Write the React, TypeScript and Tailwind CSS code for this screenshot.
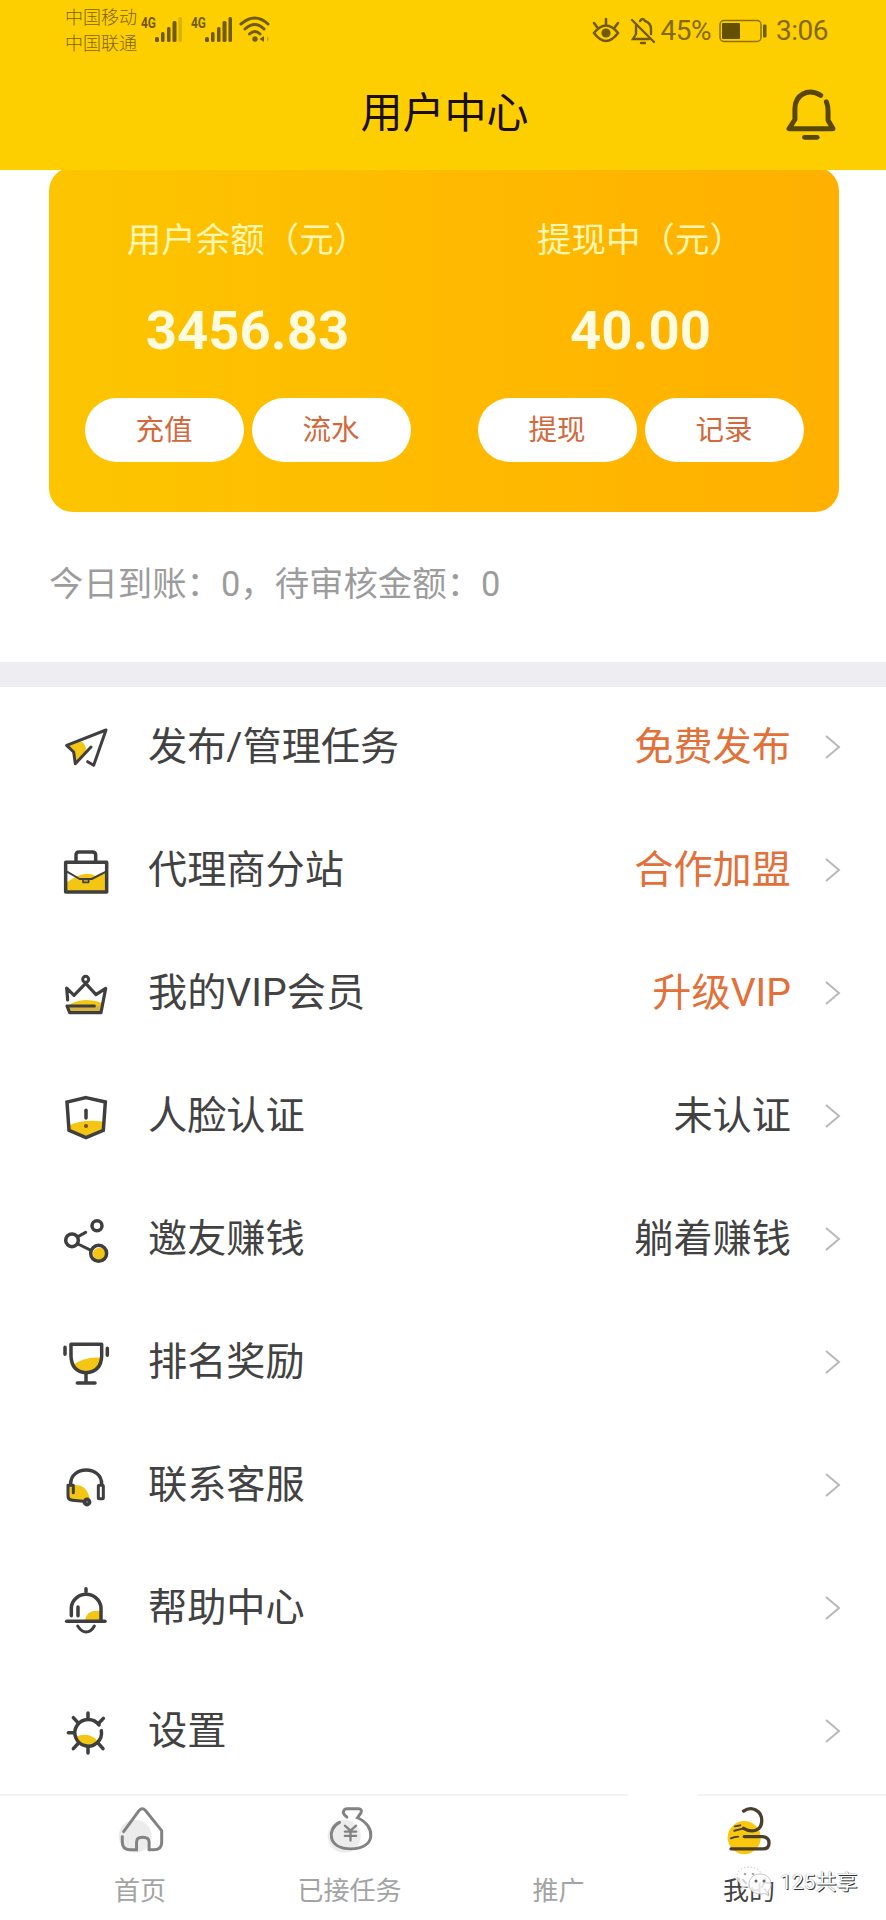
import { ReactNode } from 'react';

interface MenuItem {
  label: string;
  value?: string;
  highlight?: boolean;
  icon: ReactNode;
}

const YELLOW = '#f3c613';

/* メニューアイコン(線画 + 黄色の塗り) */
function MenuIcon({ children }: { children: ReactNode }) {
  return (
    <svg
      className="w-[46px] h-[46px] shrink-0 overflow-visible"
      viewBox="0 0 138 138"
      fill="none"
      stroke="#3f3f3f"
      strokeWidth={10.5}
      strokeLinecap="round"
      strokeLinejoin="round"
    >
      {children}
    </svg>
  );
}

const menuItems: MenuItem[] = [
  {
    label: '发布/管理任务',
    value: '免费发布',
    highlight: true,
    icon: (
      <>
        <path d="M12 62L48 50Q72 56 68 82L38 118L32 84Z" fill={YELLOW} stroke="none" />
        <path
          d="M74 113L92 124L129 18L11 64L32 84L37 119L84 69"
          strokeWidth={9}
        />
      </>
    ),
  },
  {
    label: '代理商分站',
    value: '合作加盟',
    highlight: true,
    icon: (
      <>
        <path d="M10 132V108Q38 84 70 80Q92 80 100 90L132 74V132Z" fill={YELLOW} stroke="none" />
        <path d="M8 46H131V135H8Z" />
        <path d="M39 44V24Q39 15 48 15H88Q98 15 98 24V44" />
        <path d="M12 74L50 96H86L129 74" strokeWidth={6} />
        <path d="M60 97H77V106H60Z" strokeWidth={5} />
      </>
    ),
  },
  {
    label: '我的VIP会员',
    value: '升级VIP',
    highlight: true,
    icon: (
      <>
        <path d="M22 102Q65 80 116 98L110 128H22Z" fill={YELLOW} stroke="none" />
        <path d="M14 108H110L112 128H22Z" fill="#d5b340" stroke="none" />
        <circle cx="68" cy="28" r="9" strokeWidth={9} />
        <path
          d="M14 90L11 54L33 76L68 40L99 74L128 55L114 128H20L12 108H94"
          strokeWidth={9.5}
        />
      </>
    ),
  },
  {
    label: '人脸认证',
    value: '未认证',
    icon: (
      <>
        <path d="M16 98Q60 76 124 86L122 113L69 137L17 113Z" fill={YELLOW} stroke="none" />
        <path d="M69 14L127 27L121 112L69 134L18 112L12 27Z" strokeLinejoin="miter" />
        <path d="M69 52V75" />
        <circle cx="69" cy="99" r="6" fill="#7b4a10" stroke="none" />
      </>
    ),
  },
  {
    label: '邀友赚钱',
    value: '躺着赚钱',
    icon: (
      <>
        <circle cx="109" cy="114" r="19" fill={YELLOW} stroke="none" />
        <circle cx="27" cy="73" r="19" />
        <circle cx="102" cy="29" r="15" />
        <circle cx="107" cy="112" r="24" />
        <path d="M45 62L68 49M45 84L84 103" strokeWidth={9} />
      </>
    ),
  },
  {
    label: '排名奖励',
    icon: (
      <>
        <path d="M32 78Q62 52 114 56Q108 96 69 98Q42 96 32 78Z" fill={YELLOW} stroke="none" />
        <path d="M24 16H116V52Q114 98 69 101Q26 98 24 52Z" />
        <path d="M69 101V130M43 132H96" />
        <path d="M6 25V46M133 28V49" />
      </>
    ),
  },
  {
    label: '联系客服',
    icon: (
      <>
        <path d="M14 74Q66 56 80 108L64 118L16 112Z" fill={YELLOW} stroke="none" />
        <path d="M23 66C23 10 116 10 116 66" />
        <path d="M31 92V70H15V103Q16 114 28 115L60 118" strokeWidth={9} />
        <rect x="106" y="70" width="15" height="40" rx="3" strokeWidth={9} />
        <circle cx="72" cy="120" r="8" fill="#7a7a7a" />
      </>
    ),
  },
  {
    label: '帮助中心',
    icon: (
      <>
        <path d="M66 106Q70 74 112 78V106Z" fill={YELLOW} stroke="none" />
        <path d="M69 11V20M25 92V66A45 45 0 0 1 114 66V106" />
        <path d="M45 66V92" />
        <path d="M11 109H126" />
        <path d="M44 123Q56 141 69 141Q84 141 94 123" strokeWidth={9} />
      </>
    ),
  },
  {
    label: '设置',
    icon: (
      <>
        <path d="M38 86Q76 70 104 98Q92 114 75 114Q46 112 38 86Z" fill={YELLOW} stroke="none" />
        <path d="M108 51A40 40 0 1 0 115 68" />
        <path d="M75 15V30M31 29L44 43M121 31L108 45M16 74H32M31 122L44 108M75 135V118M120 122L106 106" />
      </>
    ),
  },
];

/* 信号強度 */
function Signal({ weak }: { weak?: boolean }) {
  return (
    <svg className="w-[42px] h-[28px]" viewBox="0 0 42 28" fill="#705a00">
      <text
        x="0"
        y="12.5"
        fontSize="15"
        fontWeight="700"
        fontFamily="Roboto, sans-serif"
        textLength="15"
        lengthAdjust="spacingAndGlyphs"
      >
        4G
      </text>
      <rect x="14" y="22" width="4" height="5" rx="1.5" />
      <rect x="20" y="17" width="3.5" height="10" rx="1.5" />
      <rect x="26" y="12" width="3.5" height="15" rx="1.5" />
      <rect x="31.5" y="6" width="4" height="21" rx="1.5" />
      <rect x="37.5" y="2" width="3.5" height="25" rx="1.5" opacity={weak ? 0.25 : 1} />
    </svg>
  );
}

function StatusBar() {
  return (
    <div className="flex items-start justify-between h-[62px] pl-[65px] pr-[58px] text-[#7b6300]">
      <div className="flex">
        <div className="pt-[5px] text-[18px] leading-[26px] font-light">
          <div>中国移动</div>
          <div>中国联通</div>
        </div>
        <div className="flex pt-[15px] pl-1 gap-2">
          <Signal weak />
          <Signal />
          <svg
            className="w-[32px] h-[28px] -ml-0.5"
            viewBox="0 0 32 28"
            fill="none"
            stroke="#705a00"
            strokeWidth={3}
            strokeLinecap="round"
          >
            <path d="M2 9Q16 -3 29 9" />
            <path d="M6 14Q16 5 25 14" />
            <path d="M10.5 19Q16 14 21 19" />
            <circle cx="16" cy="24" r="2.7" fill="#705a00" stroke="none" />
            <path d="M25 21L20.5 24L25 27Z" fill="#705a00" stroke="none" />
            <path d="M28 21L30 24L28 27Z" fill="#705a00" stroke="none" opacity=".35" />
          </svg>
        </div>
      </div>

      <div className="flex items-center pt-[14px] text-[28px] leading-[34px] tracking-[-0.5px] text-[#826900]">
        <svg
          className="w-[28px] h-[28px] mr-[10px]"
          viewBox="0 0 28 28"
          fill="none"
          stroke="#705a00"
          strokeWidth={2.6}
          strokeLinecap="round"
        >
          <path d="M2 16Q14 1 26 16Q14 32 2 16Z" />
          <circle cx="14" cy="16" r="4.6" fill="#705a00" stroke="none" />
          <path d="M14 2V7M2 6L5 10M26 6L23 10" />
        </svg>
        <svg
          className="w-[26px] h-[28px] mr-[5px]"
          viewBox="0 0 26 28"
          fill="none"
          stroke="#705a00"
          strokeWidth={2.4}
          strokeLinecap="round"
        >
          <path d="M10 4Q13 0 15 4Q21 6 21 12V17" />
          <path d="M6 9V17L3 22H19" />
          <path d="M2 3L24 25" />
          <path d="M11 26H15" />
        </svg>
        <span>45%</span>
        <svg className="w-[48px] h-[24px] ml-[8px] mr-[9px]" viewBox="0 0 48 24">
          <rect x="1" y="1.5" width="41" height="21" rx="4" fill="none" stroke="#8a7000" strokeWidth={1.5} />
          <rect x="3" y="4" width="18" height="16" rx="1" fill="#635000" />
          <rect x="44" y="5.5" width="3.5" height="13" rx="1" fill="#705a00" />
        </svg>
        <span>3:06</span>
      </div>
    </div>
  );
}

function Header() {
  return (
    <header className="relative z-10 h-[170px] bg-[#fecf00]">
      <StatusBar />
      <div className="grid grid-cols-[1fr_auto_1fr] items-center h-[102px] pl-[3px]">
        <span />
        <h1 className="pt-0.5 text-[42px] leading-none text-[#1a0f00]">用户中心</h1>
        <svg
          className="w-[53px] h-[54px] justify-self-end mr-[49px] mt-1"
          viewBox="0 0 158 163"
          fill="none"
          stroke="#574700"
          strokeWidth={15}
          strokeLinecap="round"
          strokeLinejoin="round"
        >
          <path d="M110 22C70 -2 32 22 32 62V95L14 123H147L132 97V70Q132 54 127 42" />
          <path d="M61 149H99" />
        </svg>
      </div>
    </header>
  );
}

interface BalanceProps {
  title: string;
  amount: string;
  actions: string[];
}

function Balance({ title, amount, actions }: BalanceProps) {
  return (
    <div className="flex flex-col items-center">
      <div className="text-[34.5px] leading-[50px] text-[#fff6b0]">{title}</div>
      <div className="mt-[33px] text-[54.5px] leading-[64px] font-bold text-[#fffbe0]">
        {amount}
      </div>
      <div className="flex gap-2 mt-[36px]">
        {actions.map((action) => (
          <button
            key={action}
            className="w-[159px] h-[64px] rounded-full bg-white text-[28.5px] leading-none pt-0.5 text-[#d2683c]"
          >
            {action}
          </button>
        ))}
      </div>
    </div>
  );
}

function TabBar() {
  return (
    <nav className="relative flex h-[126px] pl-[35px] border-t-2 border-[#f3f3f3] text-[26px] leading-[36px] text-[#a3a3a3]">
      {/* 中央ボタンの切り欠き */}
      <div className="absolute -top-0.5 left-[628px] w-[70px] h-0.5 bg-white" />

      <div className="flex flex-col items-center w-[210px] pt-[9px]">
        <svg
          className="w-[48px] h-[50px] ml-1"
          viewBox="0 0 145 150"
          fill="none"
          stroke="#828282"
          strokeWidth={9}
          strokeLinecap="round"
        >
          <circle cx="52" cy="94" r="50" fill="#ececec" stroke="none" />
          <path d="M94 135H108Q132 135 132 112V77L83 16Q73 6 64 16L17 80" />
          <path d="M94 135V112Q94 97 74 97Q56 97 56 112V135H38Q13 135 13 112V95" />
        </svg>
        <span className="mt-[18px]">首页</span>
      </div>

      <div className="flex flex-col items-center w-[209px] pt-[9px]">
        <svg
          className="w-[48px] h-[50px] ml-0.5"
          viewBox="0 0 145 150"
          fill="none"
          stroke="#828282"
          strokeWidth={9}
          strokeLinecap="round"
        >
          <circle cx="52" cy="94" r="50" fill="#ececec" stroke="none" />
          <path d="M60 36Q44 26 52 14Q54 11 60 11H96Q108 12 102 24L92 38C148 62 150 132 72 132C0 132 0 70 38 52" />
          <path d="M54 62L71 77L88 62M71 77V107M54 80H88M54 93H88" strokeWidth={7} />
        </svg>
        <span className="mt-[18px]">已接任务</span>
      </div>

      <div className="flex flex-col items-center w-[209px] pt-[77px]">
        <span>推广</span>
      </div>

      <div className="flex flex-col items-center w-[172px] pt-[9px]">
        <svg
          className="w-[48px] h-[50px] ml-1"
          viewBox="0 0 145 150"
          fill="none"
          stroke="#4a3f2c"
          strokeWidth={10}
          strokeLinecap="round"
        >
          <circle cx="52" cy="98" r="50" fill="#f9c80e" stroke="none" />
          <path d="M50 18C75 0 105 18 105 46C105 78 75 85 50 70" />
          <path d="M50 70L22 77M40 61L24 64" strokeWidth={6} />
          <path d="M52 95H108Q127 97 127 114Q127 132 108 132H12" />
          <path d="M12 100Q22 95 34 95" strokeWidth={6} />
        </svg>
        <span className="mt-[18px] text-[#444]">我的</span>
      </div>

      {/* 公式アカウントの透かし */}
      <div className="absolute left-[736px] top-[66px] flex items-center gap-[7px] text-[21px] leading-[36px] text-white">
        <svg className="w-[37px] h-[34px]" viewBox="0 0 37 34" fill="#fff" stroke="#b5b5b5" strokeWidth={0.8}>
          <path
            d="M13 3C5 3 1 8 1 13C1 17 3 19 6 21L5 25L10 23H15C22 23 26 18 26 13C26 7 20 3 13 3Z"
            strokeDasharray="1.5 2"
            fillOpacity=".75"
          />
          <path
            d="M24 10C17 10 13 15 13 20C13 26 18 30 24 30C26 30 27 30 28 29L33 32L32 27C34 25 35 23 35 20C35 14 30 10 24 10Z"
            fillOpacity=".85"
          />
          <circle cx="20" cy="17" r="1.5" fill="#666" stroke="none" />
          <circle cx="28" cy="17" r="1.5" fill="#666" stroke="none" />
          <circle cx="9" cy="10" r="1.3" fill="#aaa" stroke="none" />
          <circle cx="17" cy="10" r="1.3" fill="#aaa" stroke="none" />
        </svg>
        <span className="pt-0.5 [text-shadow:1px_1px_0_#333,0_0_1px_#666]">125共享</span>
      </div>
    </nav>
  );
}

export default function App() {
  return (
    <div className="w-[886px] h-[1920px] overflow-hidden bg-white font-[Roboto,'Noto_Sans_CJK_SC',sans-serif]">
      <Header />

      {/* 残高カード */}
      <section className="grid grid-cols-2 h-[345px] ml-[49px] mr-[47px] -mt-[3px] pt-[48px] px-0.5 rounded-[24px] bg-linear-to-r from-[#fcc500] via-[#ffb900] via-55% to-[#ffb000]">
        <Balance title="用户余额（元）" amount="3456.83" actions={['充值', '流水']} />
        <Balance title="提现中（元）" amount="40.00" actions={['提现', '记录']} />
      </section>

      <p className="h-[150px] pt-[47px] pl-[49px] text-[34.4px] leading-[50px] text-[#9c9c9c]">
        今日到账：0，待审核金额：0
      </p>
      <div className="h-[25px] bg-[#eeeef2]" />

      {/* メニュー一覧 */}
      <ul>
        {menuItems.map((item) => (
          <li
            key={item.label}
            className="flex items-center h-[123px] pl-[63px] pr-[45px] pb-1 text-[39.2px] leading-[56px] text-[#424242]"
          >
            <MenuIcon>{item.icon}</MenuIcon>
            <span className="ml-[39px] flex-1">{item.label}</span>
            {item.value && (
              <span className={item.highlight ? 'text-[#e27038]' : 'text-[#424242]'}>{item.value}</span>
            )}
            <svg
              className="w-[16px] h-[26px] ml-[34px]"
              viewBox="0 0 16 26"
              fill="none"
              stroke="#b8b8b8"
              strokeWidth={2}
            >
              <path d="M1 2L14 13L1 24" />
            </svg>
          </li>
        ))}
      </ul>

      <TabBar />
    </div>
  );
}
